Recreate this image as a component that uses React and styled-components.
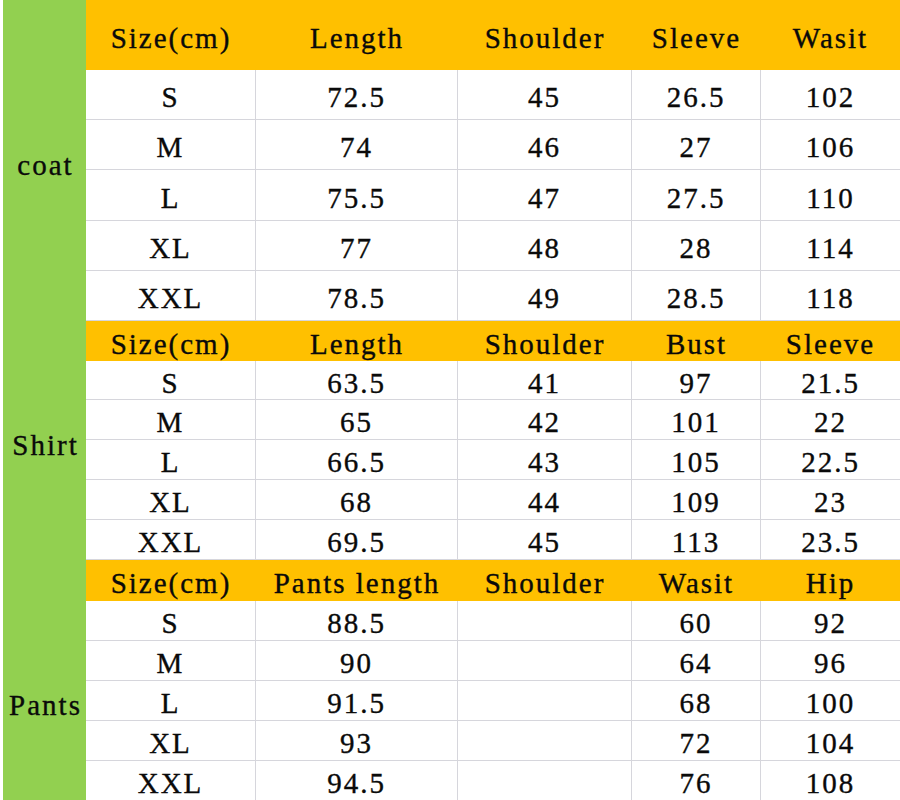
import React from "react";
import styled, { createGlobalStyle } from "styled-components";

const GlobalStyle = createGlobalStyle`
  * { box-sizing: border-box; }
  body {
    margin: 0;
    background: #ffffff;
    color: #0a0a0a;
  }
`;

const sections = [
  {
    name: "coat",
    offset: 10,
    rows: "70px 50px 50px 51px 50px 50px",
    head: ["Size(cm)", "Length", "Shoulder", "Sleeve", "Wasit"],
    body: [
      ["S", "72.5", "45", "26.5", "102"],
      ["M", "74", "46", "27", "106"],
      ["L", "75.5", "47", "27.5", "110"],
      ["XL", "77", "48", "28", "114"],
      ["XXL", "78.5", "49", "28.5", "118"],
    ],
  },
  {
    name: "Shirt",
    offset: 9,
    rows: "40px 39px 40px 40px 40px 40px",
    head: ["Size(cm)", "Length", "Shoulder", "Bust", "Sleeve"],
    body: [
      ["S", "63.5", "41", "97", "21.5"],
      ["M", "65", "42", "101", "22"],
      ["L", "66.5", "43", "105", "22.5"],
      ["XL", "68", "44", "109", "23"],
      ["XXL", "69.5", "45", "113", "23.5"],
    ],
  },
  {
    name: "Pants",
    offset: 50,
    rows: "41px 40px 40px 40px 40px 40px",
    head: ["Size(cm)", "Pants length", "Shoulder", "Wasit", "Hip"],
    body: [
      ["S", "88.5", "", "60", "92"],
      ["M", "90", "", "64", "96"],
      ["L", "91.5", "", "68", "100"],
      ["XL", "93", "", "72", "104"],
      ["XXL", "94.5", "", "76", "108"],
    ],
  },
];

function SizeChart() {
  return (
    <Page>
      <Edge />
      <Sheet>
        {sections.map((sec) => (
          <Section key={sec.name} $rows={sec.rows}>
            <Label $offset={sec.offset}>{sec.name}</Label>
            {sec.head.map((h, i) => (
              <HeadCell key={"h" + i}>{h}</HeadCell>
            ))}
            {sec.body.map((row, r) =>
              row.map((v, i) => (
                <Cell key={r + "-" + i} $last={i === row.length - 1}>
                  {v}
                </Cell>
              ))
            )}
          </Section>
        ))}
      </Sheet>
    </Page>
  );
}

export default function App() {
  return (
    <>
      <GlobalStyle />
      <SizeChart />
    </>
  );
}

const Page = styled.div`
  width: 900px;
  height: 800px;
  overflow: hidden;
  display: flex;
`;

const Edge = styled.div`
  width: 3px;
  flex-shrink: 0;
  background: #ffffff;
`;

const Sheet = styled.div`
  display: flex;
  flex-direction: column;
`;

const Section = styled.div`
  display: grid;
  grid-template-columns: 83px 170px 202px 174px 129px 139px;
  grid-template-rows: ${(p) => p.$rows};
`;

const centered = `
  display: flex;
  align-items: center;
  justify-content: center;
  font-family: "Liberation Serif", serif;
  font-size: 29px;
  letter-spacing: 2px;
  white-space: nowrap;
  padding-top: 6px;
  -webkit-text-stroke: 0.35px #0a0a0a;
`;

const Label = styled.div`
  ${centered}
  grid-row: 1 / -1;
  grid-column: 1;
  background: #92d050;
  padding-top: ${(p) => p.$offset}px;
  padding-left: 2px;
`;

const HeadCell = styled.div`
  ${centered}
  background: #ffc000;
`;

const Cell = styled.div`
  ${centered}
  background: #ffffff;
  border-bottom: 1px solid #d6d6dc;
  border-right: ${(p) => (p.$last ? "none" : "1px solid #d6d6dc")};
`;
